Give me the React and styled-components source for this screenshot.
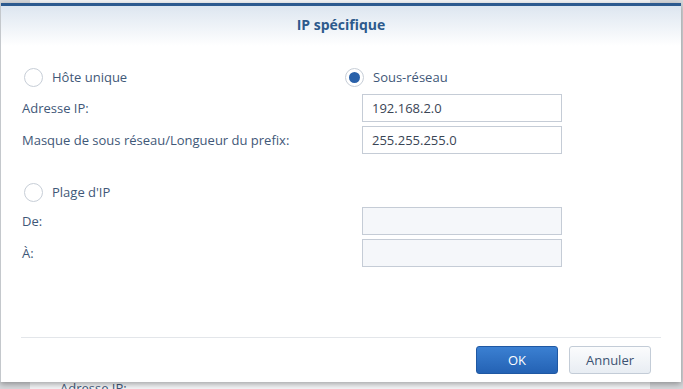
import React from "react";
import styled, { createGlobalStyle } from "styled-components";

const GlobalStyle = createGlobalStyle`
  html, body {
    margin: 0;
    padding: 0;
  }
  body {
    font-family: "Open Sans", "Liberation Sans", sans-serif;
    font-size: 13px;
    color: #3f5878;
  }
`;

const Option = function({label, checked}) {
  return (
    <RadioLabel>
      <Radio checked={checked} />
      <span>{label}</span>
    </RadioLabel>
  );
};

const Field = function({label, value, disabled}) {
  return (
    <FieldRow>
      <FieldLabel>{label}</FieldLabel>
      <TextBox value={value} disabled={disabled} readOnly />
    </FieldRow>
  );
};

export default function App() {
  return (
    <Page>
      <GlobalStyle />
      <BackPanel>
        <BackText>Adresse IP:</BackText>
      </BackPanel>
      <Dialog>
        <TopBar />
        <Header>IP spécifique</Header>
        <Body>
          <RadioRow>
            <LeftCell>
              <Option label="Hôte unique" />
            </LeftCell>
            <Option label="Sous-réseau" checked />
          </RadioRow>
          <Fields>
            <Field label="Adresse IP:" value="192.168.2.0" />
            <Field label="Masque de sous réseau/Longueur du prefix:" value="255.255.255.0" />
          </Fields>
          <RadioRow $top={28}>
            <LeftCell>
              <Option label="Plage d'IP" />
            </LeftCell>
          </RadioRow>
          <Fields $top={5}>
            <Field label="De:" value="" disabled />
            <Field label="À:" value="" disabled />
          </Fields>
        </Body>
        <Footer>
          <PrimaryButton>OK</PrimaryButton>
          <Button>Annuler</Button>
        </Footer>
      </Dialog>
    </Page>
  );
}

const Page = styled.div`
  position: relative;
  width: 683px;
  height: 389px;
  overflow: hidden;
  background: #d6d8db;
  display: flex;
  justify-content: flex-start;
`;

const BackPanel = styled.div`
  margin: 0 0 0 30px;
  width: 620px;
  height: 389px;
  background: #f4f5f7;
  display: flex;
  flex-direction: column;
  justify-content: flex-end;
`;

const BackText = styled.div`
  padding: 0 0 0 30px;
  margin-bottom: -8px;
  color: #3f5878;
  font-size: 13px;
`;

const Dialog = styled.div`
  position: absolute;
  top: 3px;
  left: 0;
  width: 680px;
  height: 379px;
  background: #fff;
  border-left: 1px solid #c4c8cc;
  box-shadow: 0 2px 6px rgba(0, 0, 0, 0.35);
  display: flex;
  flex-direction: column;
`;

const TopBar = styled.div`
  height: 3px;
  background: #2c5a8f;
`;

const Header = styled.div`
  height: 40px;
  padding-top: 5px;
  box-sizing: border-box;
  background: linear-gradient(to bottom, #dde6f0, #ffffff);
  text-align: center;
  font-weight: 700;
  font-size: 14px;
  color: #2d5a8c;
  line-height: 28px;
`;

const Body = styled.div`
  flex: 1;
  padding: 21px 0 0 21px;
  display: flex;
  flex-direction: column;
`;

const RadioRow = styled.div`
  display: flex;
  align-items: center;
  height: 20px;
  margin-top: ${p => p.$top || 0}px;
`;

const LeftCell = styled.div`
  width: 321px;
`;

const RadioLabel = styled.label`
  display: flex;
  align-items: center;
  gap: 9px;
  padding-left: 2px;
  color: #3f5878;
`;

const Radio = styled.span`
  box-sizing: border-box;
  width: 19px;
  height: 19px;
  border-radius: 50%;
  border: 1px solid #c7ced7;
  background: #fff;
  display: flex;
  align-items: center;
  justify-content: center;
  &::after {
    content: "";
    width: 11px;
    height: 11px;
    border-radius: 50%;
    background: ${p => (p.checked ? "#2a61a9" : "transparent")};
  }
`;

const Fields = styled.div`
  display: flex;
  flex-direction: column;
  gap: 4px;
  margin-top: ${p => p.$top || 7}px;
`;

const FieldRow = styled.div`
  display: flex;
  align-items: center;
`;

const FieldLabel = styled.div`
  width: 340px;
  color: #3f5878;
`;

const TextBox = styled.input`
  box-sizing: border-box;
  width: 200px;
  height: 28px;
  padding: 0 9px;
  border: 1px solid #c5ccd6;
  background: #fff;
  font-family: inherit;
  font-size: 13px;
  color: #3a4555;
  outline: none;
  &:disabled {
    background: #f5f7fa;
  }
`;

const Footer = styled.div`
  margin: 0 20px 0 20px;
  border-top: 1px solid #e3e6ea;
  padding: 8px 10px 8px 0;
  display: flex;
  justify-content: flex-end;
  gap: 11px;
`;

const Button = styled.button`
  box-sizing: border-box;
  width: 82px;
  height: 28px;
  border-radius: 3px;
  border: 1px solid #c3ccd7;
  background: linear-gradient(to bottom, #fbfcfd, #e8edf3);
  font-family: inherit;
  font-size: 13px;
  color: #3c5272;
  cursor: pointer;
`;

const PrimaryButton = styled(Button)`
  border-color: #1f58a3;
  background: linear-gradient(to bottom, #3b80d2, #2462b4);
  color: #fff;
`;
